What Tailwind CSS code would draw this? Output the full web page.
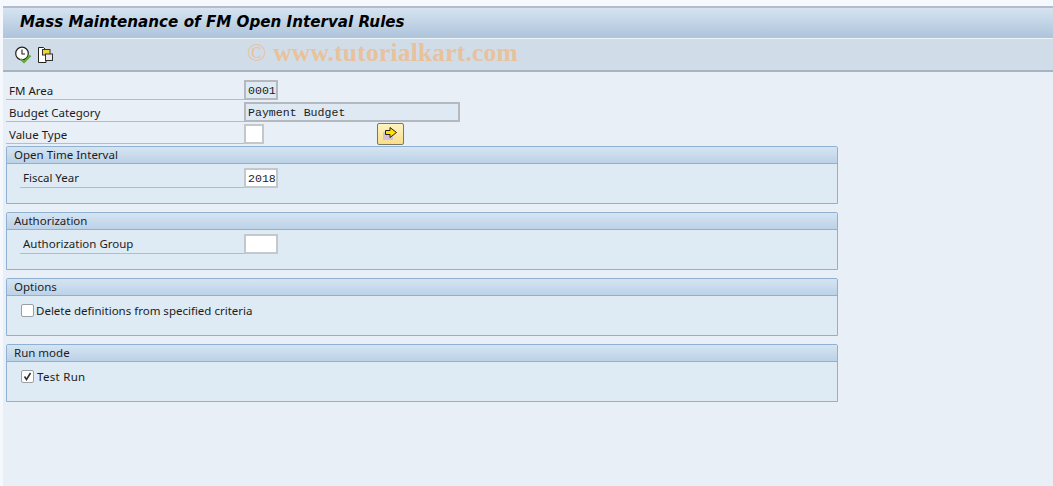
<!DOCTYPE html>
<html lang="en">
<head>
  <meta charset="UTF-8" />
  <title>Mass Maintenance of FM Open Interval Rules</title>
  <script src="https://cdn.jsdelivr.net/npm/@tailwindcss/browser@4"></script>
</head>
<body class="w-[1053px] h-[486px] overflow-hidden bg-[#f5f8fc] font-['Noto_Sans',sans-serif] text-[11.5px] text-[#1c1c1c]">

  <!-- Title bar -->
  <div class="h-[6px]"></div>
  <div class="ml-[3px] h-[2px] bg-[#b4bccb]"></div>
  <div class="ml-[3px] h-[30px] bg-gradient-to-b from-[#d6e3f0] to-[#adc4db] pl-[17px] pb-[2px] flex items-center">
    <h1 class="font-['DejaVu_Sans',sans-serif] font-bold italic text-[15.15px] text-black whitespace-nowrap">Mass Maintenance of FM Open Interval Rules</h1>
  </div>

  <!-- Toolbar -->
  <div class="ml-[3px] h-[34px] border-t border-t-[#eef3f8] border-b-2 border-b-[#a5b3c5] bg-[#d0dde8] flex items-center relative">
    <svg class="ml-[11px] mt-[1px]" width="18" height="18" viewBox="0 0 18 18">
      <circle cx="8" cy="7.5" r="6.3" fill="#fff" stroke="#222" stroke-width="1.2"/>
      <path d="M8 3.5V8H11" fill="none" stroke="#222" stroke-width="1.1"/>
      <path d="M6.5 13L10 16L16.5 9.5" fill="none" stroke="#5fa83a" stroke-width="2.2"/>
    </svg>
    <svg class="ml-[4px] mt-[1px]" width="18" height="18" viewBox="0 0 18 18">
      <path d="M2.5 1.5H7.5L10 4V16.5H2.5Z" fill="#fff" stroke="#222"/>
      <rect x="6.5" y="3.5" width="7.5" height="5.5" fill="#f2d43c" stroke="#333"/>
      <rect x="9.5" y="8" width="7" height="6.5" fill="#e9e9e9" stroke="#333"/>
    </svg>
    <span class="absolute left-[244px] top-[-5px] font-['Liberation_Serif',serif] font-bold text-[25.5px] text-[#e9c19b] whitespace-nowrap tracking-[0.2px]"><span class="font-normal">©</span> www.tutorialkart.com</span>
  </div>

  <!-- Screen body -->
  <div class="ml-[3px] h-[414px] bg-[#e8eff7] pt-[6px] pl-[3px]">

    <div class="w-[832px]">
      <div class="flex h-[22px] items-end">
        <label class="w-[238px] h-[22px] pl-[3px] border-b border-[#b5bcc4] leading-[25px]">FM Area</label>
        <div class="w-[34px] h-[20px] border-2 border-[#b3b9bf] bg-[#dfe9f3] font-['Liberation_Mono',monospace] text-[11.6px] leading-[17px] pl-[2px]">0001</div>
      </div>
      <div class="flex h-[22px] items-end">
        <label class="w-[238px] h-[22px] pl-[3px] border-b border-[#b5bcc4] leading-[25px]">Budget Category</label>
        <div class="w-[216px] h-[20px] border-2 border-[#b3b9bf] bg-[#dfe9f3] font-['Liberation_Mono',monospace] text-[11.6px] leading-[17px] pl-[2px]">Payment Budget</div>
      </div>
      <div class="flex h-[22px] items-end">
        <label class="w-[238px] h-[22px] pl-[3px] border-b border-[#b5bcc4] leading-[25px]">Value Type</label>
        <div class="w-[20px] h-[20px] border-2 border-[#c3c8cd] bg-white"></div>
        <button class="w-[27px] h-[22px] ml-[113px] mb-[-1px] rounded-[2px] border border-[#77786a] bg-gradient-to-b from-[#fdf3c2] to-[#f9de89] flex items-center justify-center">
          <svg width="17" height="16" viewBox="0 0 17 16">
            <rect x="1" y="6" width="10" height="8" fill="#d3bfd9"/>
            <path d="M3.5 4.5H8V1.5L14.5 6.5L8 11.5V8.5H3.5Z" fill="#ffe000" stroke="#222"/>
          </svg>
        </button>
      </div>
    </div>

    <!-- Groups -->
    <section class="w-[832px] h-[58px] mt-[2px] border border-[#8fb0d0] rounded-t-[2px] bg-[#deeaf4]">
      <div class="h-[17px] border-b border-[#8fb0d0] bg-gradient-to-b from-[#d5e4f2] to-[#bcd2e7] pl-[7px] leading-[16px]">Open Time Interval</div>
      <div class="flex items-end h-[24px] pl-[13px]">
        <label class="w-[224px] h-[24px] pl-[3px] border-b border-[#b5bcc4] leading-[28px]">Fiscal Year</label>
        <div class="w-[34px] h-[20px] border-2 border-[#c3c8cd] bg-white font-['Liberation_Mono',monospace] text-[11.6px] leading-[17px] pl-[2px]">2018</div>
      </div>
    </section>

    <section class="w-[832px] h-[58px] mt-[8px] border border-[#8fb0d0] rounded-t-[2px] bg-[#deeaf4]">
      <div class="h-[17px] border-b border-[#8fb0d0] bg-gradient-to-b from-[#d5e4f2] to-[#bcd2e7] pl-[7px] leading-[16px]">Authorization</div>
      <div class="flex items-end h-[24px] pl-[13px]">
        <label class="w-[224px] h-[24px] pl-[3px] border-b border-[#b5bcc4] leading-[28px]">Authorization Group</label>
        <div class="w-[34px] h-[20px] border-2 border-[#c3c8cd] bg-white"></div>
      </div>
    </section>

    <section class="w-[832px] h-[58px] mt-[8px] border border-[#8fb0d0] rounded-t-[2px] bg-[#deeaf4]">
      <div class="h-[17px] border-b border-[#8fb0d0] bg-gradient-to-b from-[#d5e4f2] to-[#bcd2e7] pl-[7px] leading-[16px]">Options</div>
      <div class="flex items-center h-[24px] pl-[14px] pt-[5px]">
        <div class="w-[13px] h-[13px] rounded-[2px] border border-[#9a9fa5] bg-white"></div>
        <span class="ml-[2px]">Delete definitions from specified criteria</span>
      </div>
    </section>

    <section class="w-[832px] h-[58px] mt-[8px] border border-[#8fb0d0] rounded-t-[2px] bg-[#deeaf4]">
      <div class="h-[17px] border-b border-[#8fb0d0] bg-gradient-to-b from-[#d5e4f2] to-[#bcd2e7] pl-[7px] leading-[16px]">Run mode</div>
      <div class="flex items-center h-[24px] pl-[14px] pt-[5px]">
        <div class="w-[13px] h-[13px] rounded-[2px] border border-[#9a9fa5] bg-white flex items-center justify-center">
          <svg width="11" height="11" viewBox="0 0 11 11"><path d="M2.5 5.5L4.5 8.5L8.5 2" fill="none" stroke="#333" stroke-width="1.6"/></svg>
        </div>
        <span class="ml-[3px] tracking-[0.3px]">Test Run</span>
      </div>
    </section>
  </div>
</body>
</html>
